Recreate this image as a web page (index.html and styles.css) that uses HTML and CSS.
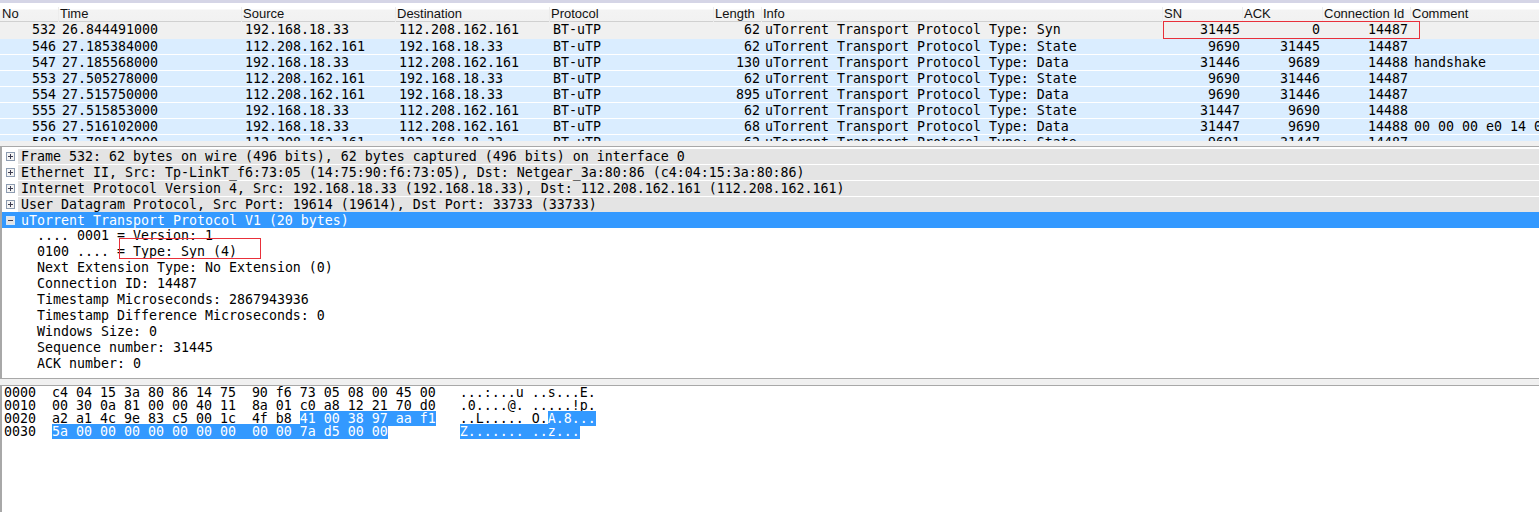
FILE: index.html
```html
<!DOCTYPE html>
<html lang="en">
<head>
<meta charset="utf-8">
<title>Wireshark uTP capture</title>
<link rel="stylesheet" href="styles.css">
</head>
<body>
<div class="app">
  <section class="list">
    <div class="row head">
      <div class="hc">No</div><div class="hc">Time</div><div class="hc">Source</div><div class="hc">Destination</div><div class="hc">Protocol</div><div class="hc r-head">Length</div><div class="hc">Info</div><div class="hc">SN</div><div class="hc">ACK</div><div class="hc">Connection Id</div><div class="hc">Comment</div>
    </div>
    <div class="rows">
      <div class="row pkt first"><div class="c num">532</div><div class="c">26.844491000</div><div class="c">192.168.18.33</div><div class="c">112.208.162.161</div><div class="c">BT-uTP</div><div class="c len">62</div><div class="c">uTorrent Transport Protocol Type: Syn</div><div class="c end">31445</div><div class="c end">0</div><div class="c end">14487</div><div class="c"></div></div>
      <div class="row pkt"><div class="c num">546</div><div class="c">27.185384000</div><div class="c">112.208.162.161</div><div class="c">192.168.18.33</div><div class="c">BT-uTP</div><div class="c len">62</div><div class="c">uTorrent Transport Protocol Type: State</div><div class="c end">9690</div><div class="c end">31445</div><div class="c end">14487</div><div class="c"></div></div>
      <div class="row pkt"><div class="c num">547</div><div class="c">27.185568000</div><div class="c">192.168.18.33</div><div class="c">112.208.162.161</div><div class="c">BT-uTP</div><div class="c len">130</div><div class="c">uTorrent Transport Protocol Type: Data</div><div class="c end">31446</div><div class="c end">9689</div><div class="c end">14488</div><div class="c">handshake</div></div>
      <div class="row pkt"><div class="c num">553</div><div class="c">27.505278000</div><div class="c">112.208.162.161</div><div class="c">192.168.18.33</div><div class="c">BT-uTP</div><div class="c len">62</div><div class="c">uTorrent Transport Protocol Type: State</div><div class="c end">9690</div><div class="c end">31446</div><div class="c end">14487</div><div class="c"></div></div>
      <div class="row pkt"><div class="c num">554</div><div class="c">27.515750000</div><div class="c">112.208.162.161</div><div class="c">192.168.18.33</div><div class="c">BT-uTP</div><div class="c len">895</div><div class="c">uTorrent Transport Protocol Type: Data</div><div class="c end">9690</div><div class="c end">31446</div><div class="c end">14487</div><div class="c"></div></div>
      <div class="row pkt"><div class="c num">555</div><div class="c">27.515853000</div><div class="c">192.168.18.33</div><div class="c">112.208.162.161</div><div class="c">BT-uTP</div><div class="c len">62</div><div class="c">uTorrent Transport Protocol Type: State</div><div class="c end">31447</div><div class="c end">9690</div><div class="c end">14488</div><div class="c"></div></div>
      <div class="row pkt"><div class="c num">556</div><div class="c">27.516102000</div><div class="c">192.168.18.33</div><div class="c">112.208.162.161</div><div class="c">BT-uTP</div><div class="c len">68</div><div class="c">uTorrent Transport Protocol Type: Data</div><div class="c end">31447</div><div class="c end">9690</div><div class="c end">14488</div><div class="c">00 00 00 e0 14 00 00 00</div></div>
      <div class="row pkt"><div class="c num">589</div><div class="c">27.785142000</div><div class="c">112.208.162.161</div><div class="c">192.168.18.33</div><div class="c">BT-uTP</div><div class="c len">62</div><div class="c">uTorrent Transport Protocol Type: State</div><div class="c end">9691</div><div class="c end">31447</div><div class="c end">14487</div><div class="c"></div></div>
    </div>
    <div class="mark mark-sn"></div>
  </section>

  <section class="details">
    <div class="node"><span class="box plus"></span><span class="ntext">Frame 532: 62 bytes on wire (496 bits), 62 bytes captured (496 bits) on interface 0</span></div>
    <div class="node"><span class="box plus"></span><span class="ntext">Ethernet II, Src: Tp-LinkT_f6:73:05 (14:75:90:f6:73:05), Dst: Netgear_3a:80:86 (c4:04:15:3a:80:86)</span></div>
    <div class="node"><span class="box plus"></span><span class="ntext">Internet Protocol Version 4, Src: 192.168.18.33 (192.168.18.33), Dst: 112.208.162.161 (112.208.162.161)</span></div>
    <div class="node"><span class="box plus"></span><span class="ntext">User Datagram Protocol, Src Port: 19614 (19614), Dst Port: 33733 (33733)</span></div>
    <div class="node sel"><span class="box"></span><span class="ntext">uTorrent Transport Protocol V1 (20 bytes)</span></div>
    <div class="leaf">.... 0001 = Version: 1</div>
    <div class="leaf">0100 .... = Type: Syn (4)</div>
    <div class="leaf">Next Extension Type: No Extension (0)</div>
    <div class="leaf">Connection ID: 14487</div>
    <div class="leaf">Timestamp Microseconds: 2867943936</div>
    <div class="leaf">Timestamp Difference Microseconds: 0</div>
    <div class="leaf">Windows Size: 0</div>
    <div class="leaf">Sequence number: 31445</div>
    <div class="leaf">ACK number: 0</div>
    <div class="mark mark-type"></div>
  </section>

  <div class="split"></div>

  <section class="hex">
<pre class="dump">0000  c4 04 15 3a 80 86 14 75  90 f6 73 05 08 00 45 00   ...:...u ..s...E.
0010  00 30 0a 81 00 00 40 11  8a 01 c0 a8 12 21 70 d0   .0....@. .....!p.
0020  a2 a1 4c 9e 83 c5 00 1c  4f b8 <span class="hl">41 00 38 97 aa f1</span>   ..L..... O.<span class="hl">A.8...</span>
0030  <span class="hl">5a 00 00 00 00 00 00 00  00 00 7a d5 00 00</span>         <span class="hl">Z....... ..z...</span></pre>
  </section>
</div>
</body>
</html>
```
FILE: styles.css
```css
* { box-sizing: border-box; }
html, body { margin: 0; padding: 0; background: #fff; }
body { width: 1539px; height: 512px; overflow: hidden; }
.app {
  display: flex;
  flex-direction: column;
  height: 512px;
  color: #000;
  font-family: "DejaVu Sans Mono", "Liberation Mono", monospace;
  font-size: 13.29px;
}
.list {
  position: relative;
  height: 147px;
  padding-top: 4px;
  border-top: 3px solid #d5d5e6;
  border-bottom: 1px solid #a8a8a8;
  background: #f0f0f0;
  flex: none;
}
.row {
  display: grid;
  grid-template-columns: 58px 183px 154px 154px 164px 48px 401px 80px 80px 88px 129px;
}
.head {
  height: 19px;
  margin-top: -4px;
  padding-top: 4px;
  background: linear-gradient(#fff 0, #fff 6px, #f3f3f3 7px, #f1f1f1 100%);
  box-shadow: inset 0 -1px 0 #d0d0d0;
  font-family: "Liberation Sans", Arial, sans-serif;
  font-size: 13px;
  line-height: 14px;
  color: #111;
}
.hc {
  padding-left: 1px;
  border-left: 1px solid #ececec;
  white-space: nowrap;
  overflow: hidden;
}
.hc:first-child { border-left: 0; padding-left: 2px; }
.r-head { text-align: right; padding-right: 7px; overflow: visible; }
.rows { height: 119px; overflow: hidden; background: #fff; }
.pkt {
  height: 16px;
  line-height: 15px;
  background: #daedff;
  border-bottom: 1px solid #fff;
}
.first { height: 17px; line-height: 16px; background: #f0f0f0; border-bottom: 0; }
.c { padding-left: 4px; white-space: pre; overflow: hidden; }
.num { text-align: right; padding: 0 2px 0 0; }
.len { text-align: right; padding: 0 1px 0 0; overflow: visible; }
.end { text-align: right; padding: 0 2px 0 0; }
.split { flex: none; height: 6px; background: #f0f0f0; }
.details {
  position: relative;
  height: 232px;
  padding-top: 1px;
  border-left: 2px solid #a8a8a8;
  border-bottom: 1px solid #a8a8a8;
  background: #fff;
  flex: none;
}
.node {
  display: flex;
  align-items: center;
  height: 16px;
  padding-left: 4px;
  line-height: 15px;
  white-space: pre;
}
.ntext {
  flex: 1;
  height: 15px;
  margin-left: 3px;
  padding-left: 3px;
  background: #e4e4e4;
}
.box {
  position: relative;
  flex: none;
  width: 9px;
  height: 9px;
  border: 1px solid #8c9bb0;
  background: #f4f4f4;
}
.box::before {
  content: "";
  position: absolute;
  left: 1px;
  top: 3px;
  width: 5px;
  height: 1px;
  background: #3c3c50;
}
.plus::after {
  content: "";
  position: absolute;
  left: 3px;
  top: 1px;
  width: 1px;
  height: 5px;
  background: #3c3c50;
}
.sel { height: 16px; background: #3399ff; color: #fff; }
.sel .ntext { background: transparent; color: #fff; }
.sel .box { border-color: #d8e8f8; background: #e4e4e4; }
.leaf {
  height: 16px;
  padding-left: 35px;
  line-height: 16px;
  white-space: pre;
}
.hex {
  flex: 1;
  min-height: 0;
  border-top: 1px solid #a8a8a8;
  border-left: 2px solid #a8a8a8;
  background: #fff;
  padding-left: 2px;
}
.dump {
  margin: 0;
  font: inherit;
  line-height: 13px;
}
.hl { background: #3399ff; color: #fff; }
.mark { position: absolute; border: 1px solid #e8303a; pointer-events: none; }
.mark-sn { left: 1163px; top: 18px; width: 257px; height: 18px; }
.mark-type { left: 117px; top: 91px; width: 142px; height: 21px; }
```
